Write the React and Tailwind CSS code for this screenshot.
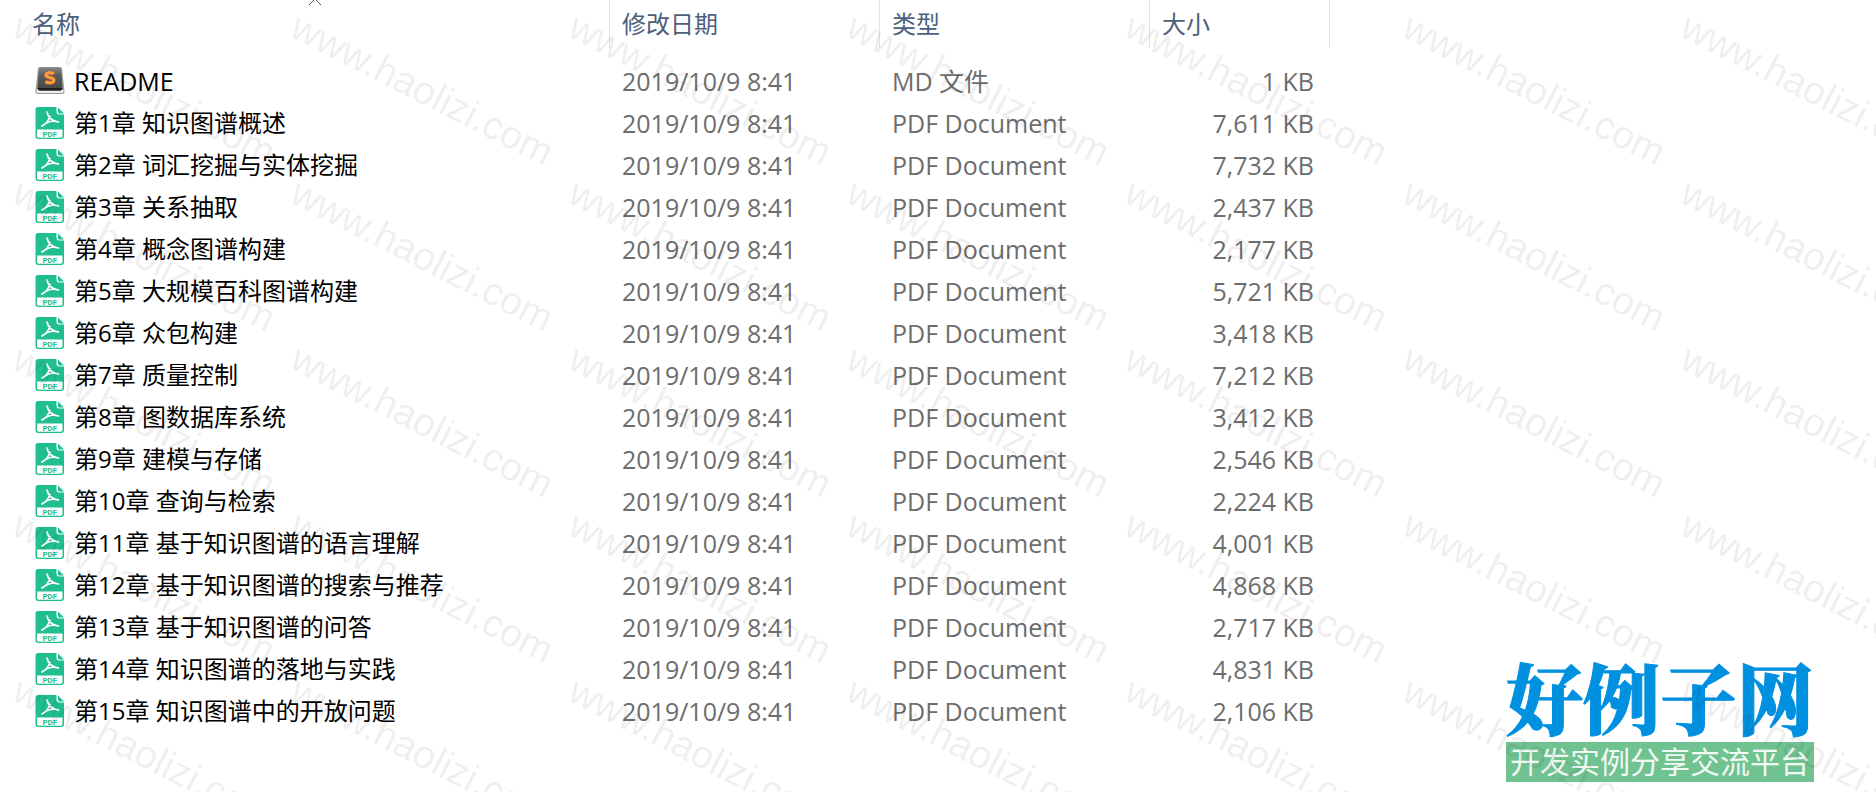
import React from 'react'

const FILES = [
  { name: 'README', kind: 'md', type: 'MD 文件', size: '1 KB' },
  { name: '第1章 知识图谱概述', size: '7,611 KB' },
  { name: '第2章 词汇挖掘与实体挖掘', size: '7,732 KB' },
  { name: '第3章 关系抽取', size: '2,437 KB' },
  { name: '第4章 概念图谱构建', size: '2,177 KB' },
  { name: '第5章 大规模百科图谱构建', size: '5,721 KB' },
  { name: '第6章 众包构建', size: '3,418 KB' },
  { name: '第7章 质量控制', size: '7,212 KB' },
  { name: '第8章 图数据库系统', size: '3,412 KB' },
  { name: '第9章 建模与存储', size: '2,546 KB' },
  { name: '第10章 查询与检索', size: '2,224 KB' },
  { name: '第11章 基于知识图谱的语言理解', size: '4,001 KB' },
  { name: '第12章 基于知识图谱的搜索与推荐', size: '4,868 KB' },
  { name: '第13章 基于知识图谱的问答', size: '2,717 KB' },
  { name: '第14章 知识图谱的落地与实践', size: '4,831 KB' },
  { name: '第15章 知识图谱中的开放问题', size: '2,106 KB' },
]

const MODIFIED = '2019/10/9 8:41'

// 5 rows of 7 stamps
const STAMPS = Array.from({ length: 35 }, (_, i) => i)

function SublimeIcon() {
  return (
    <svg width="30" height="28" viewBox="0 0 30 28" className="shrink-0" aria-hidden="true">
      <defs>
        <linearGradient id="keycap" x1="0" y1="0" x2="0" y2="1">
          <stop offset="0" stopColor="#858585" />
          <stop offset="0.35" stopColor="#5c5c5c" />
          <stop offset="1" stopColor="#444" />
        </linearGradient>
      </defs>
      <path d="M3 1.5 Q3.3 0 5 0 H25 Q26.7 0 27 1.5 L29.5 24 Q29.8 27 27 27 H3 Q.2 27 .5 24 Z" fill="#9a9a9a" />
      <path d="M2.5 20 L1.5 24 Q1.3 26 3 26 H27 Q28.7 26 28.5 24 L27.5 20 Z" fill="#ececec" />
      <path d="M4 2 Q4.2 .5 6 .5 H24 Q25.8 .5 26 2 L27.5 21 Q27.5 23.5 25 23.5 H5 Q2.5 23.5 2.5 21 Z" fill="url(#keycap)" />
      <path d="M2.5 21 H27.5 Q27.5 23.5 25 23.5 H5 Q2.5 23.5 2.5 21 Z" fill="#1f1f1f" />
      <path d="M19 6.5 C16.5 5.3 11 5.2 11 8.3 C11 11.2 18.8 9.8 18.8 13.2 C18.8 16.5 13 16 10.3 14.6" fill="none" stroke="#b8632a" strokeOpacity="0.5" strokeWidth="4.5" />
      <path d="M19 6.5 C16.5 5.3 11 5.2 11 8.3 C11 11.2 18.8 9.8 18.8 13.2 C18.8 16.5 13 16 10.3 14.6" fill="none" stroke="#ff9a3c" strokeWidth="3" />
    </svg>
  )
}

function PdfIcon() {
  return (
    <svg width="30" height="32" viewBox="0 0 30 32" className="shrink-0" aria-hidden="true">
      <path d="M3 0 H22 L29 7 V29 Q29 32 26 32 H3 Q.5 32 .5 29 V3 Q.5 0 3 0 Z" fill="#21bf8f" />
      <path d="M21.5 0 H30 V7.5 H24 Q21.5 7.5 21.5 5 Z" fill="#fff" />
      <path d="M23 .5 L29 6.5 H24.5 Q23 6.5 23 5 Z" fill="#21bf8f" />
      <path d="M2 22.5 H27.5 V29 Q27.5 30.7 25.5 30.7 H4 Q2 30.7 2 29 Z" fill="#fff" />
      <path d="M12 5 C13 10 17 14 23.5 15 M15 9.5 C13.5 13.5 10.5 17.5 7 19 M7 19 C10 16.3 14 14.5 19 14" fill="none" stroke="#fff" strokeWidth="1.7" strokeLinecap="round" />
      <text x="14.8" y="29.5" textAnchor="middle" fontSize="8" fontWeight="700" fontFamily="Roboto, sans-serif" fill="#21bf8f">PDF</text>
    </svg>
  )
}

function HeaderCell({ label, sorted, className }) {
  return (
    <th scope="col" className={`relative h-12 border-r border-[#e2e2e2] p-0 text-left font-normal ${className}`}>
      {sorted && (
        <svg width="14" height="5" viewBox="0 0 14 5" className="absolute top-0 left-1/2 ml-[3px]" aria-hidden="true">
          <path d="M1 5 L7 -1 L13 5" fill="none" stroke="#555" strokeWidth="1" />
        </svg>
      )}
      <button type="button" className="block leading-6">{label}</button>
    </th>
  )
}

function Watermark() {
  return (
    <div className="pointer-events-none absolute inset-0 overflow-hidden" aria-hidden="true">
      <div className="grid w-max grid-cols-[repeat(7,278px)] auto-rows-[166px] pt-2 pl-6">
        {STAMPS.map((i) => (
          <span key={i} className="origin-top-left rotate-[27deg] font-['Liberation_Sans',sans-serif] text-[39px] leading-9 whitespace-nowrap text-black/8">
            www.haolizi.com
          </span>
        ))}
      </div>
    </div>
  )
}

function SiteLogo() {
  return (
    <div className="absolute right-[62px] bottom-[10px] text-center whitespace-nowrap">
      <div className="font-['Noto_Serif_CJK_SC','Noto_Sans_CJK_SC',serif] text-[77px] leading-[76px] font-black text-[#0090e0] [-webkit-text-stroke:1px_#0090e0]">好例子网</div>
      <div className="mt-2 bg-[#70c290] px-[3px] text-[30px] leading-10 text-white/90">开发实例分享交流平台</div>
    </div>
  )
}

export default function App() {
  return (
    <div className="relative min-h-screen overflow-hidden bg-white font-['Open_Sans','Noto_Sans_CJK_SC',sans-serif] text-2xl">
      <table className="table-fixed border-separate border-spacing-0">
        <thead className="text-[#4c607a]">
          <tr>
            <HeaderCell label="名称" sorted className="w-[610px] pl-8" />
            <HeaderCell label="修改日期" className="w-[270px] pl-3" />
            <HeaderCell label="类型" className="w-[270px] pl-3" />
            <HeaderCell label="大小" className="w-[180px] pl-3" />
          </tr>
          <tr className="h-3" />
        </thead>
        <tbody className="text-[25px] text-[#6d6d6d]">
          {FILES.map((file) => (
            <tr key={file.name} className="h-[42px] leading-8">
              <td className="p-0 pl-[35px] text-black">
                <div className="flex items-center gap-[9px]">
                  {file.kind === 'md' ? <SublimeIcon /> : <PdfIcon />}
                  <span className={file.kind === 'md' ? '' : 'text-2xl leading-8'}>{file.name}</span>
                </div>
              </td>
              <td className="p-0 pl-3">{MODIFIED}</td>
              <td className="p-0 pl-3">{file.type || 'PDF Document'}</td>
              <td className="p-0 pr-4 text-right">{file.size}</td>
            </tr>
          ))}
        </tbody>
      </table>
      <SiteLogo />
      <Watermark />
    </div>
  )
}
